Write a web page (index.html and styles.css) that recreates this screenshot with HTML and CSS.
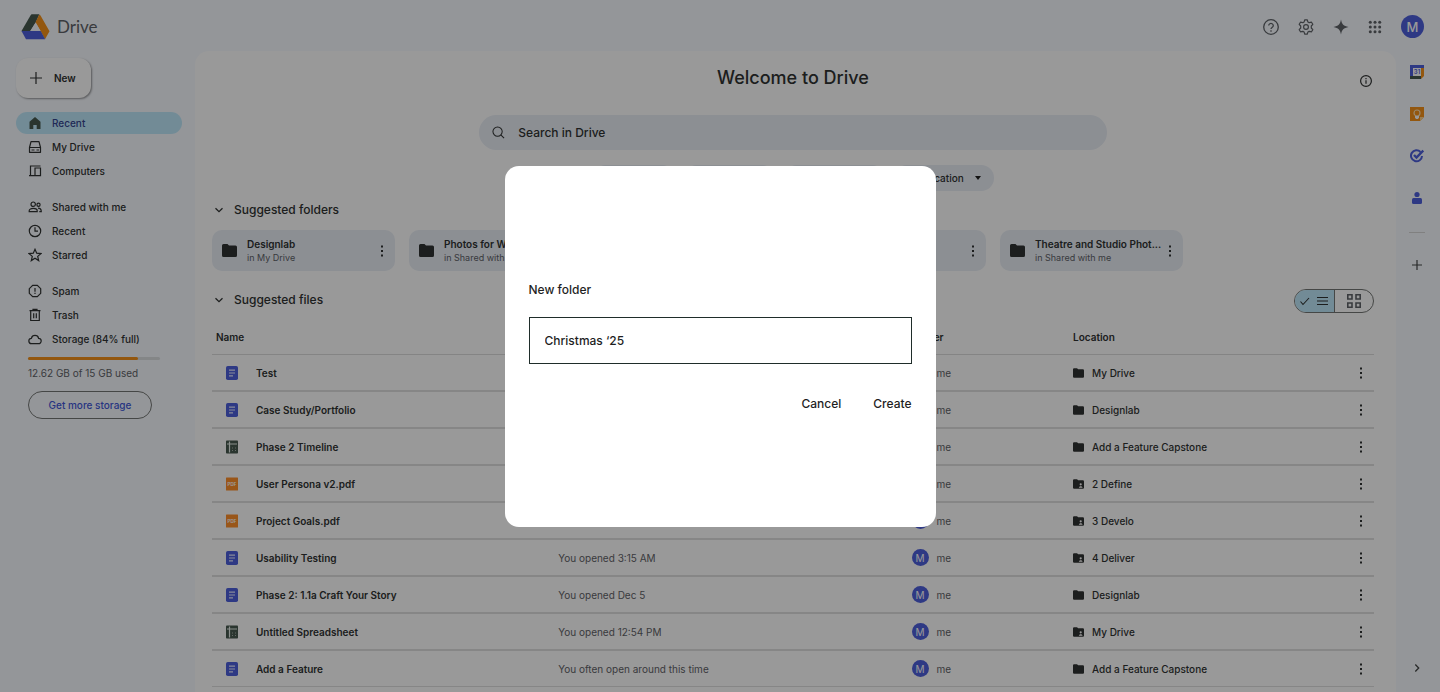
FILE: index.html
```html
<!DOCTYPE html>
<html lang="en">
<head>
    <meta charset="UTF-8">
    <meta name="viewport" content="width=device-width, initial-scale=1.0">
    <title>Drive</title>
    <link rel="stylesheet" href="styles.css">
</head>
<body>
    <!-- Icon set -->
    <svg class="sprite" aria-hidden="true">
        <symbol id="i-more" viewBox="0 0 12 12"><path fill="currentColor" d="M5 0.5h2v2H5zM5 5h2v2H5zM5 9.500h2v2H5z"/></symbol>
        <symbol id="i-folder" viewBox="0 0 15 13"><path fill="currentColor" d="M1.500 0H5.500L7 1.500H13.500A1.500 1.500 0 0 1 15 3V11.500A1.500 1.500 0 0 1 13.500 13H1.500A1.500 1.500 0 0 1 0 11.500V1.500A1.500 1.500 0 0 1 1.500 0Z"/></symbol>
        <symbol id="i-shared" viewBox="0 0 15 13"><path fill="currentColor" d="M1.500 0H5.500L7 1.500H13.500A1.500 1.500 0 0 1 15 3V11.500A1.500 1.500 0 0 1 13.500 13H1.500A1.500 1.500 0 0 1 0 11.500V1.500A1.500 1.500 0 0 1 1.500 0Z"/><circle cx="10.500" cy="7" r="1.500" fill="#fff"/><path fill="#fff" d="M8 11.700c0-3 5-3 5 0z"/></symbol>
        <symbol id="i-chevron" viewBox="0 0 10 10"><path fill="none" stroke="currentColor" stroke-width="1.300" d="M1.500 3.300 5 6.700 8.500 3.300"/></symbol>
        <symbol id="i-doc" viewBox="0 0 12 14"><rect width="12" height="14" rx="1.800" fill="#4d5fdc"/><path stroke="#e4e8ff" stroke-width="1.200" d="M3 4.200h6M3 7h6M3 9.800h4"/></symbol>
        <symbol id="i-sheet" viewBox="0 0 12 13"><rect width="12" height="13" rx="0.800" fill="#46594f"/><path stroke="#e8eeea" stroke-width="1.200" d="M1 3.500h10M3.500 1v11"/><path stroke="#a5b0a8" stroke-width="1" stroke-dasharray="1 2" d="M6 7.500h5M6 10h5"/></symbol>
        <symbol id="i-pdf" viewBox="0 0 12 13"><rect width="12" height="13" rx="0.500" fill="#ff8f2a"/><text x="6" y="8.300" text-anchor="middle" font-size="4.500" font-weight="700" fill="#fff">PDF</text></symbol>
    </svg>

    <div class="app">
        <header class="topbar">
            <a class="brand" href="#">
                <svg width="29" height="26" viewBox="0 0 29 26" aria-hidden="true">
                    <path fill="#46594f" d="M10.500 0.300h7.800L14.700 8.500 9.200 17 4.500 20 0.500 17 9.500 1.500z"/>
                    <path fill="#f5921a" d="M18.300 0.400 19.500 1.500 28.500 17.300 24 25.300 19.500 17 14.500 8.300z"/>
                    <path fill="#4d5fdc" d="M0.500 17h19.200l4.500 8.300H5z"/>
                    <path fill="#f7faff" d="M14.600 8.500 19.600 17H9.400z"/>
                </svg>
                <span>Drive</span>
            </a>
            <div class="top-actions">
                <button class="icon-btn" aria-label="Help"><svg width="16" height="16" viewBox="0 0 16 16" fill="none" stroke="currentColor" stroke-width="1.300"><circle cx="8" cy="8" r="7.300"/><path d="M5.700 6.500a2.300 2.100 0 1 1 3.600 1.800C8.300 9 8 9.300 8 10.100M8 11.200v1.500" /></svg></button>
                <button class="icon-btn" aria-label="Settings"><svg width="16" height="16" viewBox="0 0 16 16" fill="none" stroke="currentColor" stroke-width="1.200"><path stroke-linejoin="round" d="M6.800 0.800h2.400L9.900 2.900 11.200 3.700 13.500 3.200 14.800 5.300 13.300 7V9L14.800 10.700 13.500 12.800 11.200 12.300 9.900 13.100 9.200 15.200H6.800L6.100 13.100 4.800 12.300 2.500 12.800 1.200 10.700 2.700 9V7L1.200 5.300 2.500 3.200 4.800 3.700 6.100 2.900Z"/><circle cx="8" cy="8" r="2.400"/></svg></button>
                <button class="icon-btn" aria-label="Gemini"><svg width="16" height="16" viewBox="0 0 16 16"><path fill="currentColor" d="M8 0.500C9 5.500 10.500 7 15.500 8 10.500 9 9 10.500 8 15.500 7 10.500 5.500 9 0.500 8 5.500 7 7 5.500 8 0.500Z"/></svg></button>
                <button class="icon-btn" aria-label="Google apps"><svg width="14" height="14" viewBox="1 1 14 14" fill="currentColor"><circle cx="3.300" cy="3.300" r="1.500"/><circle cx="8" cy="3.300" r="1.500"/><circle cx="12.700" cy="3.300" r="1.500"/><circle cx="3.300" cy="8" r="1.500"/><circle cx="8" cy="8" r="1.500"/><circle cx="12.700" cy="8" r="1.500"/><circle cx="3.300" cy="12.700" r="1.500"/><circle cx="8" cy="12.700" r="1.500"/><circle cx="12.700" cy="12.700" r="1.500"/></svg></button>
                <button class="avatar avatar-lg" aria-label="Account">M</button>
            </div>
        </header>

        <aside class="sidebar">
            <button class="new-btn">
                <svg width="12" height="12" viewBox="0 0 12 12" stroke="currentColor" stroke-width="1.200"><path d="M6 0v12M0 6h12"/></svg>
                New
            </button>
            <nav>
                <ul class="nav-group">
                    <li><a class="active" href="#"><svg width="14" height="14" viewBox="0 0 14 14"><path fill="#46594f" d="M7 1 12.500 5.700V13H8.700V9H5.300v4H1.500V5.700z"/></svg>Recent</a></li>
                    <li><a href="#"><svg width="14" height="14" viewBox="0 0 14 14"><path stroke-linejoin="round" d="M1.500 7.500 3 1.700h8l1.500 5.800v4.800h-11zM1.500 7.500h11M8.500 10h2.500M3.500 10h3"/></svg>My Drive</a></li>
                    <li><a href="#"><svg width="14" height="14" viewBox="0 0 14 14"><path d="M12.500 2H2.500v9.500M1 11.700h6M7 4h5.500v7.700H7z"/></svg>Computers</a></li>
                </ul>
                <ul class="nav-group">
                    <li><a href="#"><svg width="14" height="14" viewBox="0 0 14 14"><circle cx="5.200" cy="4.200" r="2.200"/><circle cx="10.500" cy="4.800" r="1.600"/><path d="M1.200 11.700v-1c0-3 8-3 8 0v1zM10 8.200c2.300 0 3.300 1 3.300 3.500h-2"/></svg>Shared with me</a></li>
                    <li><a href="#"><svg width="14" height="14" viewBox="0 0 14 14"><circle cx="7" cy="7" r="5.700"/><path d="M7 3.300V7.200h3"/></svg>Recent</a></li>
                    <li><a href="#"><svg width="14" height="14" viewBox="0 0 14 14"><path d="M7 1.300 8.700 5.200 12.900 5.600 9.700 8.400 10.700 12.600 7 10.300 3.300 12.600 4.300 8.400 1.100 5.600 5.300 5.200Z"/></svg>Starred</a></li>
                </ul>
                <ul class="nav-group">
                    <li><a href="#"><svg width="14" height="14" viewBox="0 0 14 14"><path d="M4.700 1.300h4.600l3.400 3.400v4.600l-3.400 3.400H4.700L1.300 9.300V4.700zM7 4v3.700M7 8.700v1.300"/></svg>Spam</a></li>
                    <li><a href="#"><svg width="14" height="14" viewBox="0 0 14 14"><path d="M1.500 2.700h11M5 2.500V1.300h4v1.200M2.700 3v9.500h8.600V3M5.700 5.300v5M8.300 5.300v5"/></svg>Trash</a></li>
                    <li><a href="#"><svg width="14" height="14" viewBox="0 0 14 14"><path d="M3.700 11.700a2.700 2.700 0 0 1-.3-5.400 3.700 3.700 0 0 1 7.200 0 2.700 2.700 0 0 1-.2 5.400z"/></svg>Storage (84% full)</a></li>
                </ul>
            </nav>
            <div class="storage">
                <div class="storage-bar"><div class="storage-used" style="width: 83%"></div></div>
                <p>12.62 GB of 15 GB used</p>
                <button class="storage-btn">Get more storage</button>
            </div>
        </aside>

        <main class="content">
            <div class="title-row">
                <h1>Welcome to Drive</h1>
                <button class="icon-btn info" aria-label="Details"><svg width="12" height="12" viewBox="0 0 12 12" fill="none" stroke="currentColor"><circle cx="6" cy="6" r="5.400" stroke-width="1.200"/><path stroke-width="1.200" d="M6 5.200v3.500M6 3v1.200"/></svg></button>
            </div>

            <div class="search">
                <svg width="13" height="13" viewBox="0 0 14 14" fill="none" stroke="currentColor" stroke-width="1.100" aria-hidden="true"><circle cx="6" cy="6" r="5"/><path d="M9.500 9.500 13 13"/></svg>
                <input type="search" placeholder="Search in Drive" aria-label="Search in Drive">
            </div>

            <div class="filters">
                <span class="filter"><select aria-label="Type"><option>Type</option></select></span>
                <span class="filter"><select aria-label="People"><option>People</option></select></span>
                <span class="filter"><select aria-label="Modified"><option>Modified</option></select></span>
                <span class="filter"><select aria-label="Location"><option>Location</option></select></span>
            </div>

            <section>
                <h2><svg width="10" height="10"><use href="#i-chevron"/></svg>Suggested folders</h2>
                <div class="folders">
                    <article class="folder"><svg width="15" height="13"><use href="#i-folder"/></svg><div class="folder-text"><h3>Designlab</h3><p>in My Drive</p></div><button class="icon-btn" aria-label="More"><svg width="12" height="12"><use href="#i-more"/></svg></button></article>
                    <article class="folder"><svg width="15" height="13"><use href="#i-folder"/></svg><div class="folder-text"><h3>Photos for Website</h3><p>in Shared with me</p></div><button class="icon-btn" aria-label="More"><svg width="12" height="12"><use href="#i-more"/></svg></button></article>
                    <article class="folder"><svg width="15" height="13"><use href="#i-folder"/></svg><div class="folder-text"></div><button class="icon-btn" aria-label="More"><svg width="12" height="12"><use href="#i-more"/></svg></button></article>
                    <article class="folder"><svg width="15" height="13"><use href="#i-folder"/></svg><div class="folder-text"></div><button class="icon-btn" aria-label="More"><svg width="12" height="12"><use href="#i-more"/></svg></button></article>
                    <article class="folder"><svg width="15" height="13"><use href="#i-folder"/></svg><div class="folder-text"><h3>Theatre and Studio Phot...</h3><p>in Shared with me</p></div><button class="icon-btn" aria-label="More"><svg width="12" height="12"><use href="#i-more"/></svg></button></article>
                </div>
            </section>

            <section>
                <div class="files-head">
                    <h2><svg width="10" height="10"><use href="#i-chevron"/></svg>Suggested files</h2>
                    <div class="view-toggle">
                        <button class="on" aria-label="List view"><svg width="28" height="12" viewBox="0 0 28 12" fill="none" stroke="currentColor" stroke-width="1.100"><path d="M0.500 6.500 3 9.500 9 3M17 2.500h11M17 6h11M17 9.500h11"/></svg></button>
                        <button aria-label="Grid view"><svg width="14" height="14" viewBox="0 0 14 14" fill="none" stroke="currentColor" stroke-width="1.600"><path d="M0.800 0.800h4.200v4.200H0.800zM9 0.800h4.200v4.200H9zM0.800 9h4.200v4.200H0.800zM9 9h4.200v4.200H9z"/></svg></button>
                    </div>
                </div>
                <table class="files">
                    <colgroup><col class="c-name"><col class="c-reason"><col class="c-owner"><col><col class="c-more"></colgroup>
                    <thead>
                        <tr><th class="first">Name</th><th>Reason suggested</th><th>Owner</th><th>Location</th><th></th></tr>
                    </thead>
                    <tbody id="rows"></tbody>
                </table>
            </section>
        </main>

        <aside class="rail">
            <button class="icon-btn" aria-label="Calendar"><svg width="14" height="14" viewBox="0 0 14 14"><path fill="#4d5fdc" d="M0 0h14v3H3v11H0z"/><path fill="#46594f" d="M0 11h11v3H0z"/><path fill="#f5921a" d="M11 3h3v8l-3 3z"/><path fill="#fff" d="M3 3h8v8H3z"/><text x="7" y="9.200" text-anchor="middle" font-size="6" font-weight="600" fill="#4d5fdc">31</text></svg></button>
            <button class="icon-btn" aria-label="Keep"><svg width="14" height="14" viewBox="0 0 14 14"><path fill="#f5921a" d="M0 0h14v10l-4 4H0z"/><path fill="#ffd08a" d="M14 10l-4 4v-4z"/><circle cx="7" cy="6" r="3" fill="none" stroke="#ffe2b5" stroke-width="1.200"/><path fill="#fff" d="M5 9h4v1.500L8 12H6l-1-1.500z"/></svg></button>
            <button class="icon-btn" aria-label="Tasks"><svg width="14" height="14" viewBox="0 0 14 14" fill="none" stroke="#4d5fdc"><path stroke-width="2" d="M10.500 3A5.500 5.500 0 1 0 12 7"/><path stroke-width="2.400" d="M4 6 6.500 8.500 13.300 1.500"/></svg></button>
            <button class="icon-btn" aria-label="Contacts"><svg width="14" height="14" viewBox="0 0 14 14" fill="#4d5fdc"><circle cx="7" cy="3.500" r="2.600"/><rect x="2" y="7" width="10" height="6" rx="1.500"/></svg></button>
            <hr>
            <button class="icon-btn" aria-label="Get add-ons"><svg width="10" height="10" viewBox="0 0 10 10" stroke="currentColor" stroke-width="1.200"><path d="M5 0v10M0 5h10"/></svg></button>
            <button class="icon-btn collapse" aria-label="Hide side panel"><svg width="10" height="10"><use href="#i-chevron"/></svg></button>
        </aside>
    </div>

    <div class="backdrop">
        <form class="modal" role="dialog" aria-label="New folder">
            <label for="folderName">New folder</label>
            <input type="text" id="folderName" value="Christmas ‘25">
            <div class="modal-actions">
                <button type="button">Cancel</button>
                <button type="button">Create</button>
            </div>
        </form>
    </div>

    <script>
        const files = [
            ['doc', 'Test', 'You opened today', 'folder', 'My Drive'],
            ['doc', 'Case Study/Portfolio', 'You opened today', 'folder', 'Designlab'],
            ['sheet', 'Phase 2 Timeline', 'You opened today', 'folder', 'Add a Feature Capstone'],
            ['pdf', 'User Persona v2.pdf', 'You opened today', 'shared', '2 Define'],
            ['pdf', 'Project Goals.pdf', 'You opened today', 'shared', '3 Develo'],
            ['doc', 'Usability Testing', 'You opened 3:15 AM', 'shared', '4 Deliver'],
            ['doc', 'Phase 2: 1.1a Craft Your Story', 'You opened Dec 5', 'folder', 'Designlab'],
            ['sheet', 'Untitled Spreadsheet', 'You opened 12:54 PM', 'shared', 'My Drive'],
            ['doc', 'Add a Feature', 'You often open around this time', 'folder', 'Add a Feature Capstone']
        ];

        document.getElementById('rows').innerHTML = files.map(([type, name, reason, icon, place]) => `
            <tr>
                <td><div class="cell file-name"><svg width="12" height="14"><use href="#i-${type}"/></svg>${name}</div></td>
                <td class="muted">${reason}</td>
                <td class="muted"><div class="cell owner"><span class="avatar">M</span>me</div></td>
                <td><div class="cell place"><svg width="11" height="10"><use href="#i-${icon}"/></svg>${place}</div></td>
                <td><button class="icon-btn" aria-label="More"><svg width="12" height="12"><use href="#i-more"/></svg></button></td>
            </tr>`).join('');
    </script>
</body>
</html>
```
FILE: styles.css
```css
* {
    box-sizing: border-box;
}
body {
    margin: 0;
    font-family: Inter, "Liberation Sans", sans-serif;
    font-size: 10px;
    line-height: 14px;
    color: #303332;
    background-color: #f7faff;
}
h1, h2, h3, p, ul {
    margin: 0;
    padding: 0;
}
button, input, select {
    font: inherit;
    color: inherit;
}
button {
    cursor: pointer;
}
a {
    color: inherit;
    text-decoration: none;
}
svg {
    flex: none;
    display: block;
}
.sprite {
    display: none;
}
.app {
    display: grid;
    grid-template-columns: 195px 1fr 44px;
    grid-template-rows: 51px 1fr;
    min-height: 100vh;
}
.icon-btn {
    display: flex;
    padding: 0;
    border: none;
    background: none;
}

/* Top bar */
.topbar {
    grid-column: 1 / -1;
    display: flex;
    align-items: center;
    justify-content: space-between;
    padding: 2px 16px 0 21px;
}
.brand {
    display: flex;
    align-items: center;
    gap: 7px;
    font-family: Lato, Inter, sans-serif;
    font-size: 17px;
    line-height: 20px;
    color: #5f6368;
}
.top-actions {
    display: flex;
    align-items: center;
    gap: 19px;
    color: #5f6368;
}
.avatar {
    display: flex;
    align-items: center;
    justify-content: center;
    width: 17px;
    height: 17px;
    border: none;
    border-radius: 50%;
    padding: 0;
    font-size: 10px;
    color: #fff;
    background-color: #4d5fdc;
}
.avatar-lg {
    width: 23px;
    height: 23px;
    font-size: 13px;
    font-weight: 500;
}

/* Sidebar */
.sidebar {
    padding: 7px 13px 0 16px;
}
.new-btn {
    display: flex;
    align-items: center;
    gap: 12px;
    height: 40px;
    margin-bottom: 14px;
    padding: 0 15px 0 14px;
    border: none;
    border-radius: 12px;
    font-weight: 600;
    background-color: #fff;
    box-shadow: 1px 1px 2px rgba(0,0,0,0.4);
}
.nav-group {
    display: flex;
    flex-direction: column;
    gap: 2px;
    margin-bottom: 14px;
    list-style: none;
}
.nav-group a {
    display: flex;
    align-items: center;
    gap: 10px;
    height: 22px;
    padding: 0 12px;
    border-radius: 11px;
    font-weight: 500;
}
.nav-group a.active {
    color: #35458f;
    background-color: #bfe8fb;
}
.nav-group svg {
    fill: none;
    stroke: currentColor;
    stroke-width: 1.2;
}
.nav-group .active svg {
    stroke: none;
}
.storage {
    padding: 0 0 0 12px;
    margin-top: -7px;
    color: #5f6368;
}
.storage-bar {
    width: 132px;
    height: 3px;
    border-radius: 2px;
    background-color: #dcdfe2;
}
.storage-used {
    height: 3px;
    border-radius: 2px;
    background-color: #f5921a;
}
.storage p {
    margin: 6px 0 11px;
}
.storage-btn {
    width: 124px;
    height: 28px;
    padding: 0;
    border: 1px solid #747775;
    border-radius: 14px;
    font-weight: 500;
    color: #4258d8;
    background: none;
}

/* Main panel */
.content {
    padding: 15px 22px 5px 17px;
    border-radius: 14px 14px 0 0;
    background-color: #fff;
}
.title-row {
    display: grid;
    grid-template-columns: 1fr auto 1fr;
    align-items: center;
    margin-bottom: 25px;
}
h1 {
    grid-column: 2;
    font-size: 18px;
    line-height: 24px;
    font-weight: 500;
}
.info {
    justify-self: end;
    padding: 6px 2px 0;
}
.search {
    display: flex;
    align-items: center;
    gap: 13px;
    width: 54%;
    height: 35px;
    margin: 0 auto 15px;
    padding: 0 13px;
    border-radius: 18px;
    background-color: #e9eef6;
}
.search input {
    flex: 1;
    border: none;
    padding: 0;
    font-size: 12px;
    font-weight: 500;
    background: none;
}
.search input::placeholder {
    color: #303332;
}
.filters {
    display: flex;
    justify-content: center;
    gap: 9px;
    margin-bottom: 9px;
}
.filter {
    position: relative;
}
.filter select {
    display: block;
    appearance: none;
    height: 26px;
    padding: 0 29px;
    border: none;
    border-radius: 13px;
    font-weight: 500;
    background-color: #e9eef6;
}
.filter::after {
    content: "";
    position: absolute;
    top: 11px;
    right: 13px;
    border: 3px solid transparent;
    border-top: 4px solid #1f1f1f;
    border-bottom: none;
}
h2 {
    display: flex;
    align-items: center;
    gap: 10px;
    padding-left: 2px;
    font-size: 12px;
    line-height: 20px;
    font-weight: 500;
}
.folders {
    display: flex;
    gap: 14px;
    margin: 10px 0 18px;
}
.folder {
    display: flex;
    align-items: center;
    gap: 10px;
    width: 183px;
    height: 41px;
    padding: 0 7px 0 10px;
    border-radius: 10px;
    background-color: #e9eef6;
}
.folder-text {
    flex: 1;
    white-space: nowrap;
}
.folder h3 {
    font-size: 10px;
    line-height: 14px;
    font-weight: 600;
}
.folder p {
    font-size: 9px;
    line-height: 13px;
    color: #5f6368;
}
.folder .icon-btn {
    margin-left: -10px;
}
.files-head {
    display: flex;
    align-items: center;
    justify-content: space-between;
    margin-bottom: 8px;
}
.files-head h2 {
    padding-bottom: 2px;
}
.view-toggle {
    display: flex;
    width: 80px;
    height: 24px;
    border: 1px solid #747775;
    border-radius: 12px;
    overflow: hidden;
}
.view-toggle button {
    display: flex;
    flex: 1;
    align-items: center;
    justify-content: center;
    padding: 0;
    border: none;
    color: #5f6368;
    background: none;
}
.view-toggle .on {
    border-right: 1px solid #747775;
    color: #303332;
    background-color: #bfe8fb;
}

/* File table */
.files {
    width: 100%;
    table-layout: fixed;
    border-spacing: 0;
}
.c-name {
    width: 29.8%;
}
.c-reason {
    width: 30.4%;
}
.c-owner {
    width: 13.9%;
}
.c-more {
    width: 19px;
}
.files th {
    height: 34px;
    padding: 0 0 2px;
    border-bottom: 1px solid #dcdcdc;
    font-weight: 600;
    text-align: left;
}
.files th.first {
    padding-left: 4px;
}
.files td {
    height: 37px;
    padding: 0;
    border-bottom: 2px solid #e0e0e0;
    font-weight: 500;
}
.files tr:last-child td {
    height: 36px;
    border-bottom-width: 1px;
}
.files .muted {
    font-weight: 400;
    color: #5f6368;
}
.cell {
    display: flex;
    align-items: center;
    gap: 8px;
}
.file-name {
    gap: 18px;
    padding-left: 14px;
    font-weight: 600;
}

/* Side rail */
.rail {
    display: flex;
    flex-direction: column;
    align-items: center;
    gap: 28px;
    padding: 14px 2px 19px 0;
    color: #444746;
}
.rail hr {
    width: 16px;
    margin: -1px 0;
    border: none;
    border-top: 1px solid #d5d5d5;
}
.collapse {
    margin-top: auto;
    transform: rotate(-90deg);
}

/* New folder dialog */
.backdrop {
    position: fixed;
    inset: 0;
    display: flex;
    align-items: center;
    justify-content: center;
    background-color: rgba(0,0,0,0.4);
}
.modal {
    display: flex;
    flex-direction: column;
    justify-content: center;
    width: 431px;
    min-height: 361px;
    padding: 26px 24px 24px;
    border-radius: 14px;
    font-size: 12px;
    line-height: 20px;
    font-weight: 500;
    color: #1f1f1f;
    background-color: #fff;
}
.modal input {
    height: 47px;
    margin: 17px 0 30px;
    padding: 0 15px;
    border: 1px solid #1f2d2a;
    outline: none;
}
.modal-actions {
    display: flex;
    justify-content: flex-end;
    gap: 32px;
}
.modal-actions button {
    padding: 0;
    border: none;
    background: none;
}
```
